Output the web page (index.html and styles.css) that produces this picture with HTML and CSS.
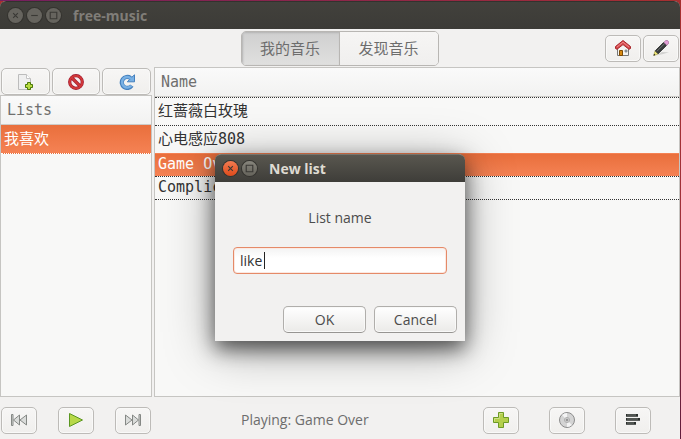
FILE: index.html
```html
<!DOCTYPE html>
<html lang="zh-CN">
<head>
<meta charset="utf-8">
<title>free-music</title>
<link rel="stylesheet" href="styles.css">
</head>
<body>
<div class="window">
  <header class="titlebar">
    <button class="wm" aria-label="Close"><svg viewBox="0 0 16 16"><path d="M5.500 5.500l5 5M10.500 5.500l-5 5"/></svg></button>
    <button class="wm" aria-label="Minimize"><svg viewBox="0 0 16 16"><path d="M4.500 8h7"/></svg></button>
    <button class="wm" aria-label="Maximize"><svg viewBox="0 0 16 16"><path d="M4.500 4.500h7v7h-7z"/></svg></button>
    <h1>free-music</h1>
  </header>

  <nav class="topbar">
    <div class="switcher">
      <button class="tab active">我的音乐</button>
      <button class="tab">发现音乐</button>
    </div>
    <div class="actions">
      <button class="btn" aria-label="Home">
        <svg viewBox="0 0 16 16"><path d="M2.500 8v7.500h11V8L8 3z" fill="#f4f4f2" stroke="#777"/><path d="M4.500 10.500h3v5h-3z" fill="#d88a12" stroke="#7c4a04"/><path d="M10 10h2v2h-2z" fill="#9db4cc" stroke="#777" stroke-width=".7"/><path d="M8 .5L.5 6.500v2l1.500.8L8 4.600l6 4.700 1.500-.8v-2z" fill="#d8484c" stroke="#a8282c"/><path d="M2 7l6-4.800L14 7" fill="none" stroke="#ee8a8a"/></svg>
      </button>
      <button class="btn" aria-label="Edit">
        <svg viewBox="0 0 16 16"><path d="M3 15.500Q11 14 16 12.200L9 12z" fill="#d2d2d0"/><path d="M.8 15.500L2 11l3 3z" fill="#f0e878" stroke="#a8a040" stroke-width=".6"/><path d="M.5 15.800l.5-2 1.400 1.300z" fill="#111"/><path d="M2.200 10.800l8.300-8.300 3 3L5.200 13.800z" fill="#383b3b" stroke="#1c1e1e" stroke-width=".7"/><path d="M4 11.200l8-8" stroke="#727676"/><path d="M11 2.200L12.800.5h1.700L15.700 2v1.300l-1.900 1.900z" fill="#e4a0d8" stroke="#a86c9c" stroke-width=".7"/></svg>
      </button>
    </div>
  </nav>

  <main class="panes">
    <section class="sidebar">
      <div class="tools">
        <button class="btn" aria-label="New list">
          <svg viewBox="0 0 16 16"><path d="M1.500.5h8l4 4v11h-12z" fill="#efefef" stroke="#bcbcbc"/><path d="M9.500.5v4h4" fill="#fff" stroke="#c4c4c4"/><path d="M10.500 8.500h3v2h2v3h-2v2h-3v-2h-2v-3h2z" fill="#b8dc40" stroke="#4a7808"/></svg>
        </button>
        <button class="btn" aria-label="Delete list">
          <svg viewBox="0 0 16 16"><circle cx="8" cy="8" r="6.300" fill="#f6eeee" stroke="#9c1630" stroke-width="3.200"/><path d="M4 4l8 8" stroke="#9c1630" stroke-width="3.200"/><circle cx="8" cy="8" r="6.300" fill="none" stroke="#d03838" stroke-width="2"/><path d="M4 4l8 8" stroke="#d03838" stroke-width="2"/></svg>
        </button>
        <button class="btn" aria-label="Refresh">
          <svg viewBox="0 0 16 16"><path d="M12.800 11.600A5.500 5.500 0 1 1 11.500 4" fill="none" stroke="#4580be" stroke-width="4.200"/><path d="M15.500.8v7H8.300l2.600-2.600L9 3.300l4-.2z" fill="#78b0e4" stroke="#4580be"/><path d="M12.300 11.800A5.300 5.300 0 1 1 12 4.500" fill="none" stroke="#78b0e4" stroke-width="2.400"/></svg>
        </button>
      </div>
      <div class="view">
        <table>
          <thead><tr><th>Lists</th></tr></thead>
          <tbody><tr class="selected"><td>我喜欢</td></tr></tbody>
        </table>
      </div>
    </section>
    <section class="view songs">
      <table>
        <thead><tr><th>Name</th></tr></thead>
        <tbody>
          <tr><td>红蔷薇白玫瑰</td></tr>
          <tr><td>心电感应808</td></tr>
          <tr class="selected latin"><td>Game Over</td></tr>
          <tr class="latin"><td>Complicated</td></tr>
        </tbody>
      </table>
    </section>
  </main>

  <footer class="player">
    <div class="transport">
      <button class="btn" aria-label="Previous"><svg viewBox="0 0 16 16"><g fill="#dadcda" stroke="#858885"><path d="M.5 2.500H2v11H.5zM8.500 3v10L2.500 8zM15.500 3v10L9 8z"/></g></svg></button>
      <button class="btn" aria-label="Play"><svg viewBox="0 0 16 16"><path d="M1.500 1.500v13L14.500 8z" fill="#b8d848" stroke="#5a9620"/></svg></button>
      <button class="btn" aria-label="Next"><svg viewBox="0 0 16 16"><g fill="#dadcda" stroke="#858885"><path d="M14 2.500h1.500v11H14zM7.500 3v10L13.500 8zM.5 3v10L7 8z"/></g></svg></button>
    </div>
    <p class="status">Playing: Game Over</p>
    <div class="extras">
      <button class="btn" aria-label="Add"><svg viewBox="0 0 16 16"><path d="M5.500.5h5v5h5v5h-5v5h-5v-5h-5v-5h5z" fill="#b4cf4c" stroke="#6c9a24"/><path d="M6.500 5.500v-4h3M1.500 9.500v-3h5" fill="none" stroke="#d0e088"/></svg></button>
      <button class="btn" aria-label="Disc"><svg viewBox="0 0 16 16"><circle cx="8" cy="8" r="7.500" fill="#d4d4d4" stroke="#8c8c8c"/><path d="M8 8L3 3a7 7 0 0 1 5-2zM8 8l5 5a7 7 0 0 1-5 2z" fill="#f4f4f4"/><circle cx="8" cy="8" r="2.500" fill="#ededed" stroke="#aaa"/><circle cx="8" cy="8" r="1" fill="#fff" stroke="#777"/></svg></button>
      <button class="btn" aria-label="Playlist"><svg viewBox="0 0 16 16"><path d="M1 2h12v2.800H1zM1 6h14v2.800H1zM1 10h10v2.800H1z" fill="#2c302e"/><path d="M2 3h9M2 7h11M2 11h7" stroke="#8a908c" stroke-width=".8"/></svg></button>
    </div>
  </footer>

  <div class="dialog" role="dialog" aria-labelledby="dialog-title">
    <header class="titlebar focused">
      <button class="wm close" aria-label="Close dialog"><svg viewBox="0 0 16 16"><path d="M5.500 5.500l5 5M10.500 5.500l-5 5"/></svg></button>
      <button class="wm" aria-label="Maximize dialog"><svg viewBox="0 0 16 16"><path d="M4.500 4.500h7v7h-7z"/></svg></button>
      <h2 id="dialog-title">New list</h2>
    </header>
    <form class="form">
      <label for="list-name">List name</label>
      <div class="field">
        <input id="list-name" type="text" value="like">
        <span class="caret"></span>
      </div>
      <div class="buttons">
        <button type="button" class="btn">OK</button>
        <button type="button" class="btn">Cancel</button>
      </div>
    </form>
  </div>
</div>
</body>
</html>
```
FILE: styles.css
```css
* { box-sizing: border-box; }

body {
  margin: 0;
  padding: 1px 1px 0 0;
  height: 100vh;
  background: linear-gradient(90deg, #75205f, #9c2b3d 80%, #a63030) top / 100% 1px no-repeat,
    linear-gradient(#a63030, #a03038 50%, #601c3c);
  color: #4c4c4c;
  font: 14px/20px "Open Sans", "Noto Sans CJK SC", sans-serif;
}

button, input { font: inherit; color: inherit; margin: 0; }
h1, h2, p { margin: 0; }

.window {
  position: relative;
  display: flex;
  flex-direction: column;
  height: 100%;
  background: #f2f1f0;
  border-radius: 6px 6px 0 0;
}

.titlebar {
  display: flex;
  align-items: center;
  gap: 4px;
  height: 28px;
  flex: none;
  padding: 0 8px;
  border-top: 1px solid #33322e;
  border-radius: 6px 6px 0 0;
  background: linear-gradient(#42413c, #3c3b37);
  color: #807d78;
}
.titlebar h1, .titlebar h2 { font-size: 14px; line-height: 20px; font-weight: 700; margin-left: 8px; }
.titlebar.focused {
  border-top-color: #77756c;
  background: linear-gradient(#59574f, #3e3d39);
  color: #dfdbd2;
}

.wm {
  width: 15px;
  height: 15px;
  padding: 0;
  border: 0;
  border-radius: 50%;
  background: #66645e;
  box-shadow: 0 0 0 1px #34332f;
}
.wm svg { display: block; fill: none; stroke: #3a3935; stroke-width: 1.2; }
.focused .wm { background: linear-gradient(#87857c, #65635b); }
.focused .close { background: linear-gradient(#f37b51, #df4b1b); }

.btn {
  display: flex;
  align-items: center;
  justify-content: center;
  width: 36px;
  height: 27px;
  padding: 0;
  border: 1px solid #bdbbb8;
  border-radius: 5px;
  background: linear-gradient(#f7f6f5, #f0efed);
  box-shadow: inset 0 0 0 1px #f9f9f8;
}
.btn svg { width: 16px; height: 16px; }

.topbar {
  display: grid;
  grid-template-columns: 1fr auto 1fr;
  align-items: center;
  height: 38px;
  flex: none;
  padding-right: 1px;
}
.switcher {
  grid-column: 2;
  display: flex;
  height: 35px;
  border: 1px solid #b8b6b3;
  border-radius: 5px;
  overflow: hidden;
}
.tab {
  width: 98px;
  padding: 0;
  border: 0;
  background: linear-gradient(#f6f5f4, #f0efee);
  color: #6d6d6d;
  font-size: 15px;
}
.tab.active {
  background: linear-gradient(#cfcfcf, #e0e0df);
  box-shadow: inset 1px 1px 2px #b4b4b4;
  border-right: 1px solid #b8b6b3;
}
.actions { display: flex; gap: 2px; justify-content: flex-end; }

.panes {
  flex: 1;
  display: grid;
  grid-template-columns: 152px 1fr;
  gap: 2px;
  min-height: 0;
}
.sidebar { display: flex; flex-direction: column; }
.tools {
  display: grid;
  grid-template-columns: repeat(3, 1fr);
  gap: 2px;
  padding: 1px 1px 0;
}
.tools .btn { width: auto; }

.view {
  flex: 1;
  background: #f8f8f7;
  border: 1px solid #c6c5c2;
  overflow: hidden;
}
table {
  width: 100%;
  border-collapse: separate;
  border-spacing: 0;
  font: 15px/20px "DejaVu Sans Mono", "Noto Sans CJK SC", monospace;
}
th {
  height: 29px;
  padding: 0 6px;
  text-align: left;
  font-weight: 400;
  color: #6f6f6e;
  background: linear-gradient(#fafafa, #f2f2f1);
  border-bottom: 1px solid #cccbc8;
}
td {
  height: 28px;
  padding: 0 3px;
  color: #333;
  border-top: 1px dotted #333;
}
.songs td { padding-bottom: 2px; }
.latin td { height: 23px; }
.latin:last-child td { height: 24px; }
tr:last-child td { border-bottom: 1px dotted #333; }
.selected td {
  color: #fff;
  background: linear-gradient(#e96f3c, #f58254);
  border-top-color: transparent;
}
.selected:last-child td { height: 29px; border-bottom-color: #fff; border-top: 0; }

.player {
  display: grid;
  grid-template-columns: 151px 1fr auto;
  align-items: center;
  height: 42px;
  flex: none;
  padding: 4px 29px 0 1px;
}
.transport { display: flex; justify-content: space-between; width: 150px; }
.status { padding-left: 89px; color: #6d6d6d; }
.extras { display: flex; gap: 30px; }

.dialog {
  position: absolute;
  top: 153px;
  left: 50%;
  width: 250px;
  transform: translateX(-50%);
  border-radius: 7px 7px 0 0;
  background: #f2f1f0;
  box-shadow: 0 8px 50px rgba(0, 0, 0, .35), 0 8px 20px rgba(0, 0, 0, .6);
}
.form {
  display: flex;
  flex-direction: column;
  padding: 26px 8px 8px;
}
.form label { text-align: center; }
.field { position: relative; margin: 19px 10px 32px; }
.field input {
  display: block;
  width: 100%;
  height: 27px;
  padding: 0 6px;
  border: 1px solid #e58a68;
  border-radius: 4px;
  outline: 0;
  background: linear-gradient(#f3f3f3, #fff 40%);
  box-shadow: inset 0 0 0 1px #fbe9e2;
  color: #333;
}
.caret {
  position: absolute;
  top: 5px;
  left: 31px;
  width: 1px;
  height: 17px;
  background: #222;
}
.buttons { display: flex; gap: 8px; justify-content: flex-end; }
.buttons .btn {
  width: 83px;
  border-color: #b0aeab #b0aeab #979592;
  background: linear-gradient(#fff, #ebeae8);
}
```
